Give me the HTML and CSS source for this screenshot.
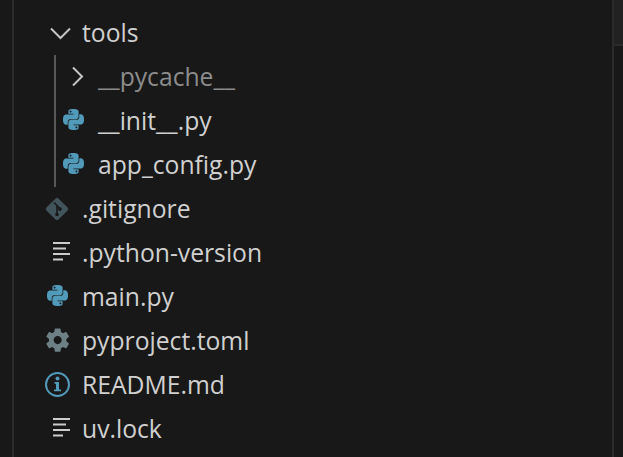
FILE: index.html
```html
<!DOCTYPE html>
<html lang="en">
<head>
<meta charset="UTF-8">
<meta name="viewport" content="width=device-width, initial-scale=1.0">
<title>Explorer</title>
<link rel="stylesheet" href="styles.css">
</head>
<body>
<svg class="defs" width="0" height="0">
    <symbol id="python" viewBox="0 0 24 24">
        <path fill-rule="evenodd" d="M14.25.18l.9.2.73.26.59.3.45.32.34.34.25.34.16.33.1.3.04.26.02.2-.01.13V8.5l-.05.63-.13.55-.21.46-.26.38-.3.31-.33.25-.35.19-.35.14-.33.1-.3.07-.26.04-.21.02H8.77l-.69.05-.59.14-.5.22-.41.27-.33.32-.27.35-.2.36-.15.37-.1.35-.07.32-.04.27-.02.21v3.06H3.17l-.21-.03-.28-.07-.32-.12-.35-.18-.36-.26-.36-.36-.35-.46-.32-.59-.28-.73-.21-.88-.14-1.05-.05-1.23.06-1.22.16-1.04.24-.87.32-.71.36-.57.4-.44.42-.33.42-.24.4-.16.36-.1.32-.05.24-.01h.16l.06.01h8.16v-.83H6.18l-.01-2.75-.02-.37.05-.34.11-.31.17-.28.25-.26.31-.23.38-.2.44-.18.51-.15.58-.12.64-.1.71-.06.77-.04.84-.02 1.27.05zm-6.3 1.98l-.23.33-.08.41.08.41.23.34.33.22.41.09.41-.09.33-.22.23-.34.08-.41-.08-.41-.23-.33-.33-.22-.41-.09-.41.09zm13.09 3.95l.28.06.32.12.35.18.36.27.36.35.35.47.32.59.28.73.21.88.14 1.04.05 1.23-.06 1.23-.16 1.04-.24.86-.32.71-.36.57-.4.45-.42.33-.42.24-.4.16-.36.09-.32.05-.24.02-.16-.01h-8.22v.82h5.84l.01 2.76.02.36-.05.34-.11.31-.17.29-.25.25-.31.24-.38.2-.44.17-.51.15-.58.13-.64.09-.71.07-.77.04-.84.01-1.27-.04-1.07-.14-.9-.2-.73-.25-.59-.3-.45-.33-.34-.34-.25-.34-.16-.33-.1-.3-.04-.25-.02-.2.01-.13v-5.34l.05-.64.13-.54.21-.46.26-.38.3-.32.33-.24.35-.2.35-.14.33-.1.3-.06.26-.04.21-.02.13-.01h5.84l.69-.05.59-.14.5-.21.41-.28.33-.32.27-.35.2-.36.15-.36.1-.35.07-.32.04-.28.02-.21V6.07h2.09l.14.01zm-6.47 14.25l-.23.33-.08.41.08.41.23.33.33.23.41.08.41-.08.33-.23.23-.33.08-.41-.08-.41-.23-.33-.33-.23-.41-.08-.41.08z"/>
    </symbol>
    <symbol id="lines" viewBox="0 0 32 32">
        <path d="M11 5h17v2H11zM11 10.500h13v2H11zM11 16h17v2H11zM11 21.500h10v2H11z"/>
    </symbol>
</svg>
<div class="window">
    <div class="tree">
        <div class="row">
            <svg class="icon chevron" viewBox="0 0 32 32"><path d="M9 11.500l9.500 9.500L28 11.500"/></svg>
            <span class="name">tools</span>
        </div>
        <div class="children">
            <div class="row">
                <svg class="icon chevron" viewBox="0 0 32 32"><path d="M15 6.500l9 9-9 9"/></svg>
                <span class="name muted">__pycache__</span>
            </div>
            <div class="row">
                <svg class="icon"><use href="#python" class="py" x="5" y="4" width="21" height="21"/></svg>
                <span class="name">__init__.py</span>
            </div>
            <div class="row">
                <svg class="icon"><use href="#python" class="py" x="5" y="4" width="21" height="21"/></svg>
                <span class="name">app_config.py</span>
            </div>
        </div>
        <div class="row">
            <svg class="icon" viewBox="0 0 32 32">
                <rect class="git" x="6.500" y="7.500" width="17" height="17" rx="2" transform="rotate(45 15 16)"/>
                <path class="git-branch" d="M12 9.500l5.500 5.500M15 12.500v9M17.500 15v3"/>
                <circle class="git-dot" cx="15" cy="21.500" r="1.800"/>
                <circle class="git-dot" cx="18" cy="16" r="1.800"/>
            </svg>
            <span class="name">.gitignore</span>
        </div>
        <div class="row">
            <svg class="icon lines"><use href="#lines"/></svg>
            <span class="name">.python-version</span>
        </div>
        <div class="row">
            <svg class="icon"><use href="#python" class="py" x="5" y="4" width="21" height="21"/></svg>
            <span class="name">main.py</span>
        </div>
        <div class="row">
            <svg class="icon" viewBox="0 0 24 24">
                <path class="gear" transform="translate(1.300 0.900) scale(0.870)" d="M19.430 12.980c.04-.32.070-.64.070-.98s-.030-.66-.070-.98l2.110-1.650c.19-.15.240-.42.120-.64l-2-3.460c-.12-.22-.39-.30-.61-.22l-2.490 1c-.52-.4-1.080-.73-1.690-.98l-.38-2.650A.488.488 0 0 0 14 2h-4c-.25 0-.46.180-.49.420l-.38 2.650c-.61.250-1.170.590-1.690.980l-2.490-1c-.23-.090-.49 0-.61.220l-2 3.460c-.13.220-.070.490.12.640l2.110 1.650c-.04.320-.07.650-.07.980s.030.660.070.980l-2.110 1.650c-.19.150-.24.420-.12.640l2 3.460c.12.220.39.300.61.220l2.490-1c.52.400 1.080.730 1.690.980l.38 2.650c.03.240.24.420.49.420h4c.25 0 .46-.180.49-.420l.38-2.650c.61-.250 1.170-.590 1.690-.980l2.490 1c.23.090.49 0 .61-.220l2-3.460c.12-.220.070-.490-.12-.640l-2.110-1.650zM12 15.500c-1.930 0-3.500-1.570-3.500-3.500s1.570-3.500 3.500-3.500 3.500 1.570 3.500 3.500-1.570 3.500-3.500 3.500z"/>
            </svg>
            <span class="name">pyproject.toml</span>
        </div>
        <div class="row">
            <svg class="icon" viewBox="0 0 32 32">
                <circle class="info-ring" cx="15.500" cy="15.500" r="11.500"/>
                <circle class="info-mark" cx="15.500" cy="9.500" r="2"/>
                <path class="info-mark" d="M12.500 13h4.500v7.500h2v1.800h-7v-1.800h2v-5.700h-1.500z"/>
            </svg>
            <span class="name">README.md</span>
        </div>
        <div class="row">
            <svg class="icon lines"><use href="#lines"/></svg>
            <span class="name">uv.lock</span>
        </div>
    </div>
    <div class="scroll">
        <div class="thumb"></div>
    </div>
</div>
</body>
</html>
```

FILE: styles.css
```css
html, body {
    margin: 0;
    padding: 0;
    width: 100%;
    height: 100%;
    overflow: hidden;
    background-color: #181818;
}
.defs {
    position: absolute;
}
.window {
    display: flex;
    height: 457px;
    padding-left: 12px;
    box-sizing: border-box;
}
.tree {
    flex: 1;
    border-left: 2px solid #2b2b2b;
    padding-top: 11px;
}
.row {
    display: flex;
    align-items: center;
    gap: 8px;
    height: 44px;
    padding-left: 28px;
}
.children {
    margin-left: 40px;
    border-left: 2px solid #585858;
}
.children .row {
    padding-left: 2px;
}
.icon {
    width: 32px;
    height: 32px;
    flex-shrink: 0;
}
.name {
    font-family: "Open Sans", sans-serif;
    font-size: 24.7px;
    color: #d0d0d0;
    white-space: nowrap;
    padding-bottom: 1px;
}
.muted {
    color: #8c8c8c;
}
.chevron path {
    fill: none;
    stroke: #c5c5c5;
    stroke-width: 2;
}
.py {
    fill: #519aba;
}
.lines {
    fill: #cccccc;
}
.git {
    fill: #41535b;
}
.git-branch {
    fill: none;
    stroke: #181818;
    stroke-width: 1.600;
}
.git-dot {
    fill: #181818;
}
.gear {
    fill: #6d8086;
    fill-rule: evenodd;
}
.info-ring {
    fill: none;
    stroke: #519aba;
    stroke-width: 2;
}
.info-mark {
    fill: #519aba;
}
.scroll {
    width: 9px;
    border-left: 2px solid #2b2b2b;
}
.thumb {
    height: 44px;
    background-color: #222222;
    border-bottom: 2px solid #2b2b2b;
}
```
